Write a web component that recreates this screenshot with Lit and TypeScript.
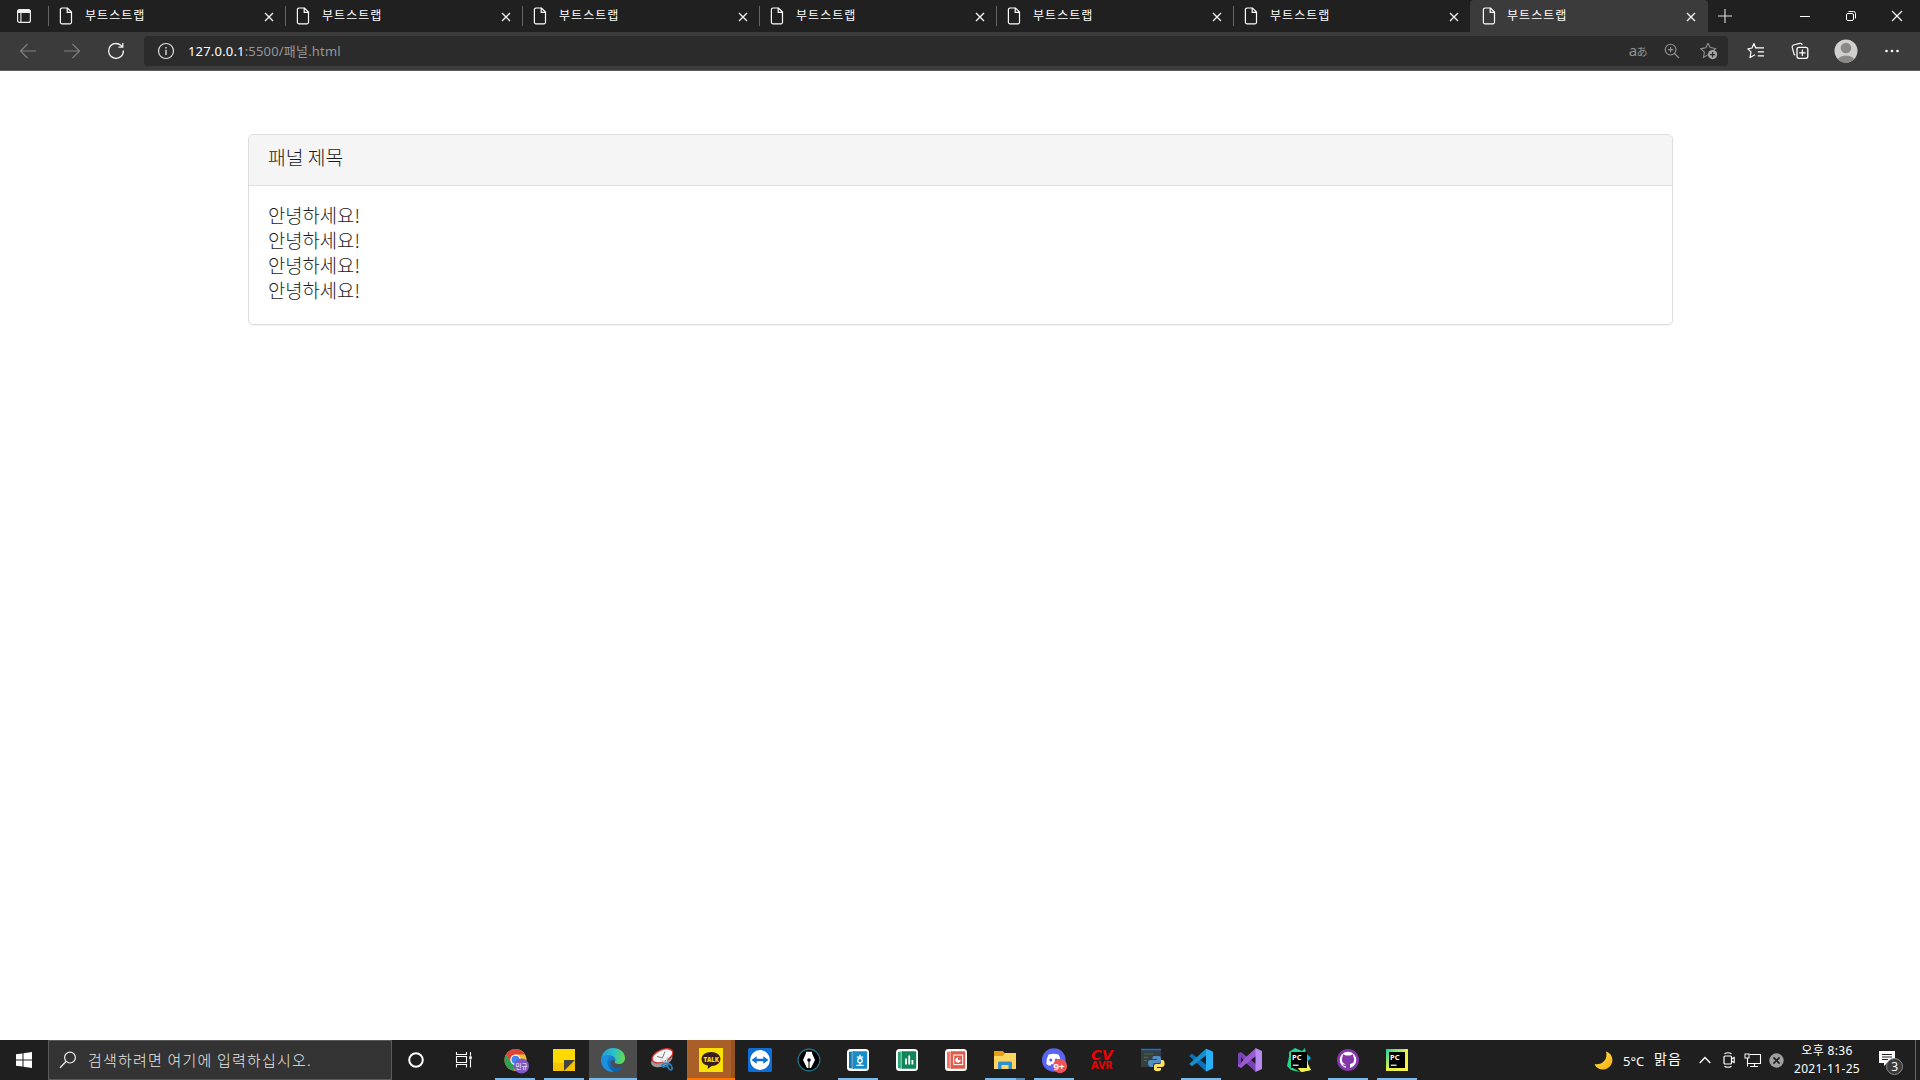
import { LitElement, html, svg, css } from "lit";
import { customElement } from "lit/decorators.js";
import { classMap } from "lit/directives/class-map.js";

const icon = (w: number, h: number, body: unknown) =>
  html`<svg width=${w} height=${h} viewBox="0 0 ${w} ${h}" fill="none">${body}</svg>`;

const page = icon(14, 18, svg`<path d="M3 1H8.5L12.5 5V15.2A1.6 1.6 0 0 1 10.9 16.8H3A1.6 1.6 0 0 1 1.4 15.2V2.6A1.6 1.6 0 0 1 3 1ZM8.2 1.2V5.4H12.4" stroke="#fff" stroke-width="1.2"/>`);
const cross = icon(10, 10, svg`<path d="M1 1L9 9M9 1L1 9" stroke="#f2f2f2" stroke-width="1.4"/>`);

const icons = {
  tabs: icon(16, 16, svg`<rect x="1.6" y="1.6" width="12.8" height="12.8" rx="2" stroke="#eee" stroke-width="1.2"/><path d="M1.5 5V3.5a2 2 0 0 1 2-2h9a2 2 0 0 1 2 2V5z" fill="#eee"/><path d="M4.9 5V14" stroke="#eee" stroke-width="1.1"/>`),
  back: icon(18, 16, svg`<path d="M17 8H1.5M8.5 1L1.5 8L8.5 15" stroke="#818181" stroke-width="1.1"/>`),
  forward: icon(18, 16, svg`<path d="M1 8H16.5M9.5 1L16.5 8L9.5 15" stroke="#818181" stroke-width="1.1"/>`),
  reload: icon(18, 18, svg`<path d="M16.4 8.5A7.4 7.4 0 1 1 13.8 3.3L15.6 5M15.8 1V5.2H11.4" stroke="#f2f2f2" stroke-width="1.3"/>`),
  info: icon(18, 18, svg`<circle cx="9" cy="9" r="7.5" stroke="#ddd" stroke-width="1.2"/><path d="M9 7.7V13M9 5V6.4" stroke="#ddd" stroke-width="1.4"/>`),
  zoom: icon(16, 16, svg`<circle cx="6.6" cy="6.6" r="5.4" stroke="#929292" stroke-width="1.1"/><path d="M10.5 10.5L15 15M3.9 6.6H9.3M6.6 3.9V9.3" stroke="#929292" stroke-width="1.2"/>`),
  star: icon(18, 18, svg`<path d="M8 1.2L10.2 5.6L15.6 6.5L13 9M8 12.6L3.5 15.4L4.4 10.2L.8 6.6L5.8 5.8L8 1.2" stroke="#929292" stroke-width="1.1"/><circle cx="12.6" cy="12.6" r="4.6" fill="#a5a5a5"/><path d="M10 12.6H15.2M12.6 10V15.2" stroke="#2b2b2b" stroke-width="1.2"/>`),
  favs: icon(18, 18, svg`<path d="M9.4 5.8H8.6L6.9 1.6L5 6L.9 6.8L4 10L3 15.6L8 12.8" stroke="#fff" stroke-width="1.2" stroke-linejoin="round"/><path d="M8.8 5.8H17M10.8 9.8H17M10.8 13.8H17" stroke="#fff" stroke-width="1.3"/>`),
  collections: icon(18, 18, svg`<path d="M4.2 13.2A2.3 2.3 0 0 1 2.8 11L1.2 5.4A2 2 0 0 1 2.5 3L8.8 1.3A2 2 0 0 1 11.2 2.8" stroke="#fff" stroke-width="1.2"/><rect x="6" y="5.3" width="10.8" height="11" rx="2" stroke="#fff" stroke-width="1.3"/><path d="M11.4 7.5V14M8.2 10.8H14.6" stroke="#fff" stroke-width="1.2"/>`),
  user: icon(24, 24, svg`<defs><clipPath id="u"><circle cx="12" cy="12" r="11.5"/></clipPath></defs><circle cx="12" cy="12" r="11.5" fill="#d2d0ce"/><g clip-path="url(#u)" fill="#8b8886"><circle cx="12" cy="9" r="5.3"/><ellipse cx="12" cy="22" rx="8.5" ry="5.5"/></g>`),
  more: icon(16, 4, svg`<g fill="#fff"><circle cx="2.5" cy="2" r="1.3"/><circle cx="8" cy="2" r="1.3"/><circle cx="13.5" cy="2" r="1.3"/></g>`),
  plus: icon(16, 16, svg`<path d="M8 1V15M1 8H15" stroke="#e0e0e0" stroke-width="1.1"/>`),
  min: icon(12, 12, svg`<path d="M1 6.5H11" stroke="#fff"/>`),
  restore: icon(12, 12, svg`<rect x="1.5" y="3.5" width="7" height="7" rx="1.5" stroke="#fff"/><path d="M3.5 1.5H8.5A2 2 0 0 1 10.5 3.5V8.5" stroke="#fff"/>`),
  close: icon(12, 12, svg`<path d="M1 1L11 11M11 1L1 11" stroke="#fff" stroke-width="1.2"/>`),
  windows: icon(16, 16, svg`<path d="M0 2.3L6.5 1.4V7.5H0zM7.5 1.2L16 0V7.5H7.5zM0 8.5H6.5V14.6L0 13.7zM7.5 8.5H16V16L7.5 14.8z" fill="#fff"/>`),
  search: icon(18, 18, svg`<circle cx="11" cy="6.6" r="5.4" stroke="#eee" stroke-width="1.2"/><path d="M7 10.5L1 16.8" stroke="#eee" stroke-width="1.3"/>`),
  cortana: icon(18, 18, svg`<circle cx="9" cy="9" r="6.8" stroke="#fff" stroke-width="2"/>`),
  taskview: icon(18, 18, svg`<path d="M1.5 1V3.5H11.5V1M1.5 16.5V13.5H11.5V16.5M1.5 5.5H11.5V11.5H1.5zM15.5 1V16.5" stroke="#fff" stroke-width="1.1"/><rect x="14" y="5" width="3" height="3.2" fill="#fff" stroke="#1f1f1f" stroke-width=".5"/>`),
};

const pcLogo = svg`<rect x="4" y="4" width="16" height="16" fill="#000"/><text x="5" y="11.8" class="pc">PC</text><path d="M5.8 17.2H11.6" stroke="#fff" stroke-width="1.2"/>`;
const hanFrame = (c: string, side: string, body: unknown) => svg`<rect x="1" y="1" width="22" height="22" rx="3.5" fill="#fff"/><path d="M3 4L8 3V21L3 20z" fill="${side}"/><path d="M6.2 3V21" stroke="#fff" stroke-width=".5"/><rect x="7" y="3.2" width="14.2" height="17.6" rx="1" fill="${c}"/>${body}`;

const apps: { state?: string; art: unknown }[] = [
  { state: "run", art: svg`<g transform="translate(1 0)"><circle cx="11.5" cy="12" r="11" fill="#f2c22e"/><path d="M2 6.5A11 11 0 0 1 21 6.5H11.5L7.2 14.5z" fill="#db4437"/><path d="M2 6.5L7.2 14.5L11.8 17L9.8 22.8A11 11 0 0 1 2 6.5" fill="#2f9e57"/><circle cx="11.5" cy="11.8" r="5.2" fill="#fff"/><circle cx="11.5" cy="11.8" r="4" fill="#4285f4"/><circle cx="17.5" cy="18" r="7.6" fill="#7e57c2"/><text x="11.6" y="20.7" class="ko">민규</text></g>` },
  { state: "run", art: svg`<path d="M1 1H23V12L12 23H1z" fill="#ffd900"/><path d="M1 15H12V23H1z" fill="#f5c400"/><path d="M12 12H23L12 23z" fill="#434343"/><path d="M23 12V23H12z" fill="#f5c400"/>` },
  { state: "active", art: svg`<defs><linearGradient id="e1" x1="0" y1=".2" x2="1" y2=".3"><stop stop-color="#259bdc"/><stop offset=".55" stop-color="#2bc1c8"/><stop offset="1" stop-color="#65db4d"/></linearGradient><linearGradient id="e2" x1="0" y1="0" x2="0" y2="1"><stop stop-color="#1b86d8"/><stop offset="1" stop-color="#0b5cab"/></linearGradient></defs><path d="M.2 11C.8 4.6 6 0 12 0C19 0 24 4.4 24 10C24 14 21 16 18 16C15 16 13.5 15 13.8 14C15.2 12.4 14.4 8.2 9.5 7.7C5.8 7.4 2 8.2 .2 11" fill="url(#e1)"/><path d="M0 12C.3 9 4.2 6.6 9 7.5C13 8 15 11 13.8 13.5C11.6 10.8 8.5 13.2 9.8 16.5C11.6 20.6 17 21.2 22 18.5C20 22.2 16 24 12 24C5 24 0 18.7 0 12" fill="url(#e2)"/><path d="M9 7.6C4.8 10.5 5.4 20.8 13 23.9C6 24.6 0 19 0 12C.4 9 4.5 6.8 9 7.6" fill="#1b91de"/>` },
  { art: svg`<ellipse cx="11.5" cy="11.5" rx="11.3" ry="6.6" transform="rotate(-24 12 11)" fill="#9b9b9b"/><ellipse cx="12.5" cy="8" rx="11" ry="6" transform="rotate(-24 12 8)" fill="#f5f5f5" stroke="#d32e2e" stroke-width="1.3"/><path d="M15 3.5L12.6 9.5M7 8.5L13 10" stroke="#777" stroke-width="1"/><path d="M10 11.5L17.5 15.5M17.5 9L15.5 16" stroke="#c3d0d7" stroke-width="1.3"/><ellipse cx="15" cy="17" rx="3" ry="1.7" transform="rotate(-20 15 17)" stroke="#2585c4" stroke-width="1.6"/><ellipse cx="19.8" cy="18.8" rx="1.8" ry="3.4" transform="rotate(-28 19.8 18.8)" stroke="#2585c4" stroke-width="1.6"/>` },
  { state: "alert", art: svg`<rect width="24" height="24" fill="#fae100"/><path d="M12 4C17.7 4 21.4 7 21.4 11.1C21.4 15.2 17.5 18 12.7 18L8.6 21L9 17.6C5 16.8 2.6 14.6 2.6 11.2C2.6 7 6.4 4 12 4" fill="#371d1e"/><text x="4.4" y="13.8" class="talk">TALK</text>` },
  { art: svg`<rect width="24" height="24" rx="1.5" fill="#0e6ed8"/><circle cx="12" cy="12" r="9.9" fill="#fff"/><path d="M3.5 12L8.7 8.2V10.8H15.3V8.2L20.5 12L15.3 15.8V13.2H8.7V15.8z" fill="#0e6ed8"/>` },
  { art: svg`<circle cx="12" cy="12" r="10.9" fill="#000" stroke="#247c91" stroke-width="1.1"/><path d="M9 3.7H15V5.2L18 12L14 20H10L6 12L9 5.2z" fill="#fff"/><circle cx="12" cy="12" r="1.8" fill="#000"/><path d="M12 12V20" stroke="#000"/>` },
  { state: "run", art: hanFrame("#168cca", "#1476b0", svg`<path d="M10.8 9.2H17.2M14 6.8V9M10.4 17.3H17.6M14 15V17" stroke="#fff" stroke-width="1.3"/><circle cx="14" cy="12.6" r="2.2" stroke="#fff" stroke-width="1.3"/>`) },
  { art: hanFrame("#108658", "#26a573", svg`<path d="M11 16.5V10.5M14.2 16.5V7.5M17.4 16.5V12" stroke="#fff" stroke-width="1.8"/>`) },
  { art: hanFrame("#df5c4d", "#ed7567", svg`<rect x="9.7" y="7" width="9" height="9.6" stroke="#fff" stroke-width="1"/><circle cx="14" cy="12" r="2.6" fill="#fff"/><path d="M14 12V9.4A2.6 2.6 0 0 1 16.6 12z" fill="#df5c4d"/>`) },
  { state: "run double", art: svg`<path d="M1 3H10L11.5 5H22V10H1z" fill="#e69e17"/><path d="M1 8H10L12 5H23V21H1z" fill="#ffd45e"/><path d="M5 21V15A1.5 1.5 0 0 1 6.5 13.5H17.5A1.5 1.5 0 0 1 19 15V21H15.5V17H8.5V21z" fill="#2d91d3"/>` },
  { state: "run", art: svg`<circle cx="11.8" cy="12" r="11.8" fill="#5865f2"/><path d="M6.6 6.6Q11.5 5 16.4 6.6Q19.4 11.3 18.6 16Q16 18 14.6 17.8L13.7 16.3H9.3L8.4 17.8Q6 17.5 4.4 16Q4 11 6.6 6.6" fill="#fff"/><circle cx="8.8" cy="12" r="1.6" fill="#5865f2"/><circle cx="14.3" cy="12" r="1.6" fill="#5865f2"/><circle cx="18" cy="18" r="7.2" fill="#eb5559"/><text x="11.6" y="21.5" class="nine">9+</text>` },
  { art: svg`<text x="0" y="11.6" class="cv">CV</text><text x="0" y="21.3" class="avr">AVR</text>` },
  { art: svg`<rect x="1" y="1" width="20" height="18" fill="#383e42"/><path d="M1 1.5H21" stroke="#087ad4" stroke-width="1.5"/><path d="M4 6H13M4 9.3H8M4 12.5H7" stroke="#3f734c" stroke-width="1.2"/><path d="M14 8H19Q21 8 21 10V13Q21 15 19 15H15Q13 15 13 17V19H11Q8 18.5 8 15T11 12H17V11H12.5V9.5Q12.5 8 14 8" fill="#508fc4"/><path d="M21 12H23Q25 13 24.5 17Q24 19 22 19H17V20H21V22Q18 24.5 14 22V18Q14 16 16 16H19.5Q21 16 21 14z" fill="#ffdf65"/>` },
  { state: "run", art: svg`<path d="M17 .7L23.7 3.6V20.4L17 23.4L1.7 9.2L.2 8L3 5.7L17 16.4z" fill="#0b72bd"/><path d="M17 7.6L3 18.3L.2 16L17 .7z" fill="#148fce"/><path d="M17 .7L24 3.7V20.3L17 23.4z" fill="#2aaef4"/>` },
  { art: svg`<path d="M0 5.5L3 4L18 16V24L8 15L3 20L0 18.2zM3 9V15L5.5 12z" fill="#7b43b8" fill-rule="evenodd"/><path d="M0 18.4L3 19.8L18 8V0L8 9L5.5 12L3 15V17L0 16z" fill="#9b59d3"/><path d="M17.5 0L24 3V21L17.5 24z" fill="#b98af2"/>` },
  { art: svg`<path d="M2 4L8 0L15 3L18 0L19 6L16 15L2 17z" fill="#23d394"/><path d="M19 6L21 9V18L24 22L15 24L17 6z" fill="#b9ee5a"/><path d="M20 6L24 10L20 14z" fill="#07b8e8"/><path d="M0 18L3 4L6 20L13 24L4 22z" fill="#25d38b"/><path d="M10 19L21 16L24 22L14 24z" fill="#f1f151"/>${pcLogo}` },
  { state: "run", art: svg`<circle cx="12" cy="12" r="11" fill="#8537aa"/><circle cx="12" cy="12" r="8.3" fill="#fff"/><path d="M7.1 6.3L10 7.4H14L16.9 6.3L17.5 9Q19 11 17.7 14Q16.8 15.4 14 16V20.2H10V18.3Q7.5 18.7 6.6 16.2Q8.6 17 10 16.2Q7.4 15.7 6.3 14Q5 11 6.5 9z" fill="#8537aa"/>` },
  { state: "run", art: svg`<defs><linearGradient id="p" x2="1" y2="1"><stop stop-color="#12d6a0"/><stop offset=".5" stop-color="#e9ef46"/><stop offset="1" stop-color="#f7f74b"/></linearGradient></defs><rect x="1" y="1" width="22" height="22" fill="url(#p)"/>${pcLogo}` },
];

@customElement("app-root")
export class AppRoot extends LitElement {
  static styles = css`
    :host { display: block; width: 1920px; height: 1080px; overflow: hidden; background: #fff; font-family: "Noto Sans", "Noto Sans CJK KR", sans-serif; }
    * { box-sizing: border-box; }
    svg { display: block; flex: none; overflow: visible; }
    .screen { display: flex; flex-direction: column; height: 1080px; }
    .tabs { display: flex; height: 32px; background: #202020; color: #fff; flex: none; }
    .tabmenu { width: 48px; padding: 8px 0 0 16px; }
    .tab { width: 237px; display: flex; align-items: center; padding: 0 11px 0 11px; font: 12px "Noto Sans CJK KR", sans-serif; position: relative; }
    .tab::before { content: ""; position: absolute; left: 0; top: 6px; width: 1px; height: 20px; background: #666; }
    .tab.on { width: 238px; padding: 0 12px; background: #3b3b3b; border-radius: 4px 4px 0 0; }
    .tab.on::before { display: none; }
    .tab .name { margin-left: 12px; flex: 1; line-height: 30px; height: 32px; letter-spacing: 1.05px; }
    .tab.on .name { margin-left: 11px; }
    .tab > svg:last-child { margin-top: 1px; }
    .winbtns { display: flex; align-items: center; flex: 1; padding-left: 9px; }
    .winbtns .b1 { margin-left: 66px; }
    .winbtns .b2 { margin-left: 34px; }
    .winbtns .b3 { margin-left: 34px; }
    .toolbar { display: flex; align-items: center; height: 39px; flex: none; padding: 0 14px 1px 19px; background: #3b3b3b; border-bottom: 1px solid #5d5d5d; }
    .toolbar .fwd { margin-left: 26px; }
    .toolbar .rel { margin-left: 26px; }
    .address { display: flex; align-items: center; width: 1584px; height: 30px; margin-left: 19px; padding: 0 10px 0 13px; border-radius: 4px; background: #2b2b2b; }
    .url { margin-left: 13px; flex: 1; font-size: 13px; color: #969696; white-space: pre; letter-spacing: .18px; }
    .url b { font-weight: 400; color: #fff; }
    .translate { font: 15px "Noto Sans", "Noto Sans CJK JP", sans-serif; color: #929292; margin-right: 17px; line-height: 16px; letter-spacing: -.6px; }
    .translate small { font-size: 11px; }
    .address .z { margin-right: 20px; }
    .toolbar .t1 { margin-left: 19px; }
    .toolbar .t2 { margin-left: 26px; }
    .toolbar .t3 { margin-left: 25px; }
    .toolbar .t4 { margin-left: 26px; }
    main { flex: 1; padding: 63px 247px 0 248px; }
    .panel { border: 1px solid #ddd; border-radius: 5px; box-shadow: 0 1px 1px rgba(0,0,0,.05); height: 191px; color: #1c1c1c; font-family: "Noto Sans CJK KR", sans-serif; font-weight: 300; }
    .heading { height: 51px; padding: 11px 19px; background: #f5f5f5; border-bottom: 1px solid #ddd; border-radius: 4px 4px 0 0; font-size: 19.3px; line-height: 22px; }
    .body { padding: 16px 19px; font-size: 18.8px; line-height: 25px; }
    .taskbar { display: flex; height: 40px; flex: none; background: #1f1f1f; color: #fff; }
    .cell { width: 48px; display: flex; align-items: center; justify-content: center; }
    .search { width: 344px; display: flex; align-items: center; padding-left: 10px; background: #333; border: 1px solid #5b5b5b; color: #e8e8e8; font: 300 15px/36px "Noto Sans CJK KR", sans-serif; letter-spacing: 1.2px; white-space: nowrap; }
    .search span { margin-left: 11px; }
    .apps { display: flex; gap: 1px; margin-left: 3px; }
    .app { width: 48px; height: 40px; display: flex; align-items: center; justify-content: center; position: relative; }
    .run::after { content: ""; position: absolute; left: 4px; bottom: 0; width: 40px; height: 2px; background: #76b9ed; }
    .active { background: #4c4c4c; border-bottom: 2px solid #76b9ed; padding-top: 2px; }
    .alert { background: linear-gradient(90deg, #aa5f29 44px, #96521f 44px); border-bottom: 2px solid #ff7300; padding-top: 2px; }
    .double::after { background: linear-gradient(90deg, #76b9ed 31px, #5287ae 31px); }
    .pc { font: 700 7.5px "Noto Sans"; fill: #fff; }
    .ko { font: 6.5px "Noto Sans CJK KR"; fill: #fff; }
    .talk { font: 800 6px "Open Sans"; fill: #fae100; }
    .nine { font: 700 9.5px "Noto Sans"; fill: #fff; }
    .cv { font: italic 700 14.5px "DejaVu Sans"; fill: #f00000; }
    .avr { font: 700 11px "Noto Sans"; fill: #f00000; }
    .tray { margin-left: auto; display: flex; align-items: center; width: 326px; font-size: 13px; }
    .weather { display: flex; align-items: center; width: 105px; white-space: pre; }
    .weather .deg { margin-left: 10px; width: 31px; padding-top: 1px; }
    .weather .sky { letter-spacing: 1.2px; font-size: 14px; line-height: 20px; padding-bottom: 2px; }
    .clock { width: 74px; margin-left: 6px; text-align: center; font-size: 12px; line-height: 18px; letter-spacing: .35px; white-space: nowrap; }
    .notify { margin-left: 15px; padding-top: 4px; }
    .peek { width: 1px; height: 40px; background: #686868; margin-left: auto; margin-right: 4px; }
    .s6 { margin-left: 11px; }
    .s8 { margin-left: 7px; }
    .s9 { margin-left: 8px; }
  `;

  render() {
    return html`<div class="screen">
      <div class="tabs">
        <div class="tabmenu">${icons.tabs}</div>
        ${Array.from({ length: 7 }, (_, i) => html`<div class=${classMap({ tab: true, on: i === 6 })}>${page}<span class="name">부트스트랩</span>${cross}</div>`)}
        <div class="winbtns">${icons.plus}<div class="b1">${icons.min}</div><div class="b2">${icons.restore}</div><div class="b3">${icons.close}</div></div>
      </div>
      <div class="toolbar">
        ${icons.back}<div class="fwd">${icons.forward}</div><div class="rel">${icons.reload}</div>
        <div class="address">${icons.info}<span class="url"><b>127.0.0.1</b>:5500/패널.html</span><span class="translate">a<small>あ</small></span><div class="z">${icons.zoom}</div>${icons.star}</div>
        <div class="t1">${icons.favs}</div><div class="t2">${icons.collections}</div><div class="t3">${icons.user}</div><div class="t4">${icons.more}</div>
      </div>
      <main>
        <section class="panel">
          <div class="heading">패널 제목</div>
          <div class="body">안녕하세요!<br>안녕하세요!<br>안녕하세요!<br>안녕하세요!</div>
        </section>
      </main>
      <div class="taskbar">
        <div class="cell">${icons.windows}</div>
        <div class="search">${icons.search}<span>검색하려면 여기에 입력하십시오.</span></div>
        <div class="cell">${icons.cortana}</div><div class="cell">${icons.taskview}</div>
        <div class="apps">${apps.map(a => html`<div class="app ${a.state ?? ""}">${icon(24, 24, a.art)}</div>`)}</div>
        <div class="tray">
          <div class="weather">${icon(19, 19, svg`<defs><linearGradient id="m" x2="1" y2="1"><stop stop-color="#ffe94e"/><stop offset="1" stop-color="#f8a90c"/></linearGradient></defs><path d="M12 .5C20 3 20.5 13 14 17C9 20 2.5 18.5 .5 13C7 14.5 14.5 9.5 12 .5" fill="url(#m)"/>`)}<span class="deg">5°C</span><span class="sky">맑음</span></div>
          ${icon(12, 8, svg`<path d="M.7 7L6 1.5L11.3 7" stroke="#fff" stroke-width="1.3"/>`)}
          <div class="s6">${icon(14, 18, svg`<rect x="2" y="5" width="7.5" height="8" rx="1" stroke="#fff" stroke-width="1.2"/><path d="M9.5 8L12.2 6.5V11.5L9.5 10M2.5 2.8Q6 .6 9.5 2.8M2.5 15.2Q6 17.4 9.5 15.2" stroke="#fff" stroke-width="1.1"/>`)}</div>
          <div class="s9">${icon(18, 14, svg`<path d="M5.5 1.5H16.5V10.5H3.5V6M10.5 10.5V13.5M6 13.5H14" stroke="#fff" stroke-width="1.1"/><rect x="1" y="1" width="4" height="4" stroke="#fff"/><path d="M3.5 5V13.5" stroke="#fff"/>`)}</div>
          <div class="s8">${icon(15, 15, svg`<circle cx="7.5" cy="7.5" r="7.2" fill="#a0a0a0"/><path d="M4.4 4.4L10.6 10.6M10.6 4.4L4.4 10.6" stroke="#202020" stroke-width="1.6"/>`)}</div>
          <div class="clock">오후 8:36<br>2021-11-25</div>
          <div class="notify">${icon(25, 26, svg`<path d="M0 2H16V14H8L5 17V14H0z" fill="#fff"/><path d="M3 5.5H13M3 8H13M3 10.5H9" stroke="#222"/><circle cx="15.5" cy="17.5" r="8" fill="#3b3b3b" stroke="#898989"/><text x="12.2" y="22" font-size="12" fill="#fff">3</text>`)}</div>
          <div class="peek"></div>
        </div>
      </div>
    </div>`;
  }
}
